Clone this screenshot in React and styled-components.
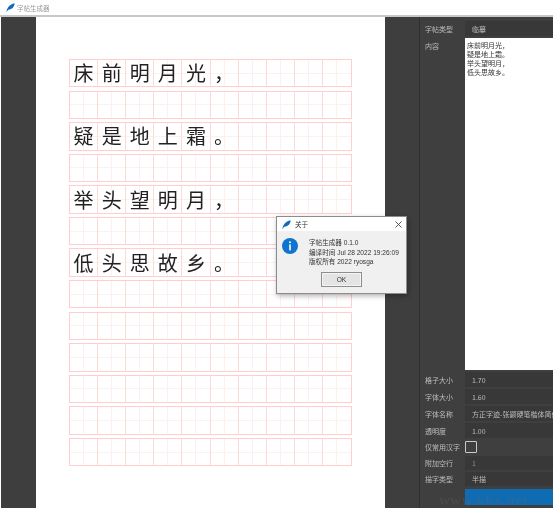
import React from 'react'
import styled, { createGlobalStyle } from 'styled-components'

const GlobalStyle = createGlobalStyle`
  html, body { margin: 0; padding: 0; background: #fff; overflow: hidden; }
  body { font-family: "Noto Sans CJK SC", "Liberation Sans", sans-serif; }
`

const Window = styled.div`
  position: relative;
  width: 553px;
  height: 508px;
  overflow: hidden;
  display: flex;
  flex-direction: column;
  background: #fff;
  filter: blur(0.3px);
`

const TitleBar = styled.div`
  height: 15px;
  flex: none;
  display: flex;
  align-items: center;
  gap: 2px;
  padding-left: 6px;
  border-bottom: 2px solid #c8c8c8;
  font-size: 6.5px;
  color: #9a9a9a;
`

const Body = styled.div`
  flex: 1;
  min-height: 0;
  display: flex;
  padding-left: 1px;
`

const Gutter = styled.div`
  flex: none;
  width: ${p => p.$width}px;
  background: #3e3e3e;
  border-right: ${p => (p.$line ? '1px solid #2f2f2f' : 'none')};
  box-sizing: border-box;
`

const Page = styled.div`
  flex: none;
  width: 349px;
  box-sizing: border-box;
  padding: 42px 0 0 33px;
  background: #fff;
`

const Sheet = styled.div`
  width: 283px;
  display: grid;
  grid-auto-rows: 28.4px;
  row-gap: 3.2px;
`

const GridRow = styled.div`
  display: grid;
  grid-template-columns: repeat(10, 1fr);
  box-sizing: border-box;
  border: 1px solid #ffcfcf;
`

const Cell = styled.div`
  display: flex;
  align-items: center;
  justify-content: center;
  border-right: 1px solid #ffd8d8;
  font-size: 20px;
  font-weight: 400;
  line-height: 1;
  color: #222;
  background:
    linear-gradient(#fff0f0, #fff0f0) center / 100% 1px no-repeat,
    linear-gradient(#fff0f0, #fff0f0) center / 1px 100% no-repeat;

  &:last-child { border-right: none; }
`

const Panel = styled.div`
  flex: 1;
  min-width: 0;
  background: #3f3f3f;
  padding: 4px 0 0 5px;
  display: grid;
  grid-template-columns: 40px 100px;
  grid-template-rows: 15px 332px repeat(4, 15px) 14px repeat(2, 14px) 17px;
  row-gap: 2px;
  align-items: center;
  font-size: 7px;
  color: #bdbdbd;
`

const Label = styled.div`
  align-self: ${p => (p.$top ? 'start' : 'center')};
  padding-top: ${p => (p.$top ? '3px' : '0')};
  white-space: nowrap;
`

const Field = styled.div`
  height: 100%;
  box-sizing: border-box;
  padding-left: 7px;
  display: flex;
  align-items: center;
  background: #383838;
  color: ${p => (p.$dim ? '#8f8f8f' : '#bcbcbc')};
  white-space: nowrap;
  overflow: hidden;
`

const TextBox = styled.div`
  height: 100%;
  box-sizing: border-box;
  padding: 3px 2px;
  background: #fff;
  color: #333;
  line-height: 9px;
  white-space: pre-line;
`

const CheckBox = styled.div`
  width: 10px;
  height: 10px;
  border: 1px solid #c9c9c9;
  border-radius: 1px;
`

const ActionBar = styled.div`
  height: 16px;
  margin-top: 1px;
  background: #0f6bb2;
`

const Watermark = styled.div`
  position: absolute;
  left: 439px;
  bottom: -1px;
  font-family: "Liberation Serif", serif;
  font-size: 15px;
  font-weight: 700;
  letter-spacing: 0.5px;
  color: rgba(110, 110, 110, 0.2);
`

const Dialog = styled.div`
  position: absolute;
  left: 276px;
  top: 216px;
  width: 131px;
  height: 78px;
  box-sizing: border-box;
  display: flex;
  flex-direction: column;
  background: #f0f0f0;
  border: 1px solid #8c8c8c;
  box-shadow: 1px 2px 5px rgba(0, 0, 0, 0.3);
  font-size: 6.6px;
  color: #333;
`

const DialogTitle = styled.div`
  height: 14px;
  flex: none;
  display: flex;
  align-items: center;
  gap: 4px;
  padding: 0 4px 0 5px;
  background: #fff;
`

const CloseButton = styled.div`
  margin-left: auto;
  display: flex;
`

const DialogBody = styled.div`
  display: flex;
  gap: 11px;
  padding: 7px 0 0 5px;
`

const InfoLine = styled.div`
  line-height: 9.7px;
  white-space: nowrap;
  font-family: "Liberation Sans", "Noto Sans CJK SC", sans-serif;
`

const OkButton = styled.div`
  align-self: center;
  margin-top: 5px;
  width: 41px;
  height: 15px;
  box-sizing: border-box;
  display: flex;
  align-items: center;
  justify-content: center;
  background: #e4e4e4;
  border: 1px solid #8e8e8e;
  box-shadow: inset 0 0 0 1px #f4f4f4;
  font-family: "Liberation Sans", sans-serif;
`

const Feather = () => (
  <svg width="9" height="9" viewBox="0 0 10 10">
    <path d="M0.5 9.6 C1.2 6 3.6 1.6 9.6 0.4 C9.4 4.4 6.6 7.6 2.4 7.4 L0.9 9.8 Z" fill="#0f6cbd" />
  </svg>
)

const InfoIcon = () => (
  <svg width="16" height="16" viewBox="0 0 16 16">
    <circle cx="8" cy="8" r="8" fill="#0f74d0" />
    <circle cx="8" cy="4.2" r="1" fill="#fff" />
    <rect x="7.2" y="6.4" width="1.6" height="6" fill="#fff" />
  </svg>
)

const poem = ['床前明月光，', '', '疑是地上霜。', '', '举头望明月，', '', '低头思故乡。', '', '', '', '', '', '']

export default function App() {
  return (
    <Window>
      <GlobalStyle />
      <TitleBar>
        <Feather />
        字帖生成器
      </TitleBar>
      <Body>
        <Gutter $width={35} />
        <Page>
          <Sheet>
            {poem.map((line, r) => (
              <GridRow key={r}>
                {Array.from({ length: 10 }, (_, c) => (
                  <Cell key={c}>{line[c]}</Cell>
                ))}
              </GridRow>
            ))}
          </Sheet>
        </Page>
        <Gutter $width={35} $line />
        <Panel>
          <Label>字帖类型</Label>
          <Field>临摹</Field>
          <Label $top>内容</Label>
          <TextBox>{'床前明月光，\n疑是地上霜。\n举头望明月，\n低头思故乡。'}</TextBox>
          <Label>格子大小</Label>
          <Field>1.70</Field>
          <Label>字体大小</Label>
          <Field>1.60</Field>
          <Label>字体名称</Label>
          <Field>方正字迹-张颢硬笔楷体简体</Field>
          <Label>透明度</Label>
          <Field>1.00</Field>
          <Label>仅常用汉字</Label>
          <CheckBox />
          <Label>附加空行</Label>
          <Field $dim>1</Field>
          <Label>描字类型</Label>
          <Field>半描</Field>
          <span />
          <ActionBar />
        </Panel>
      </Body>
      <Watermark>www.kkx.net</Watermark>
      <Dialog>
        <DialogTitle>
          <Feather />
          关于
          <CloseButton>
            <svg width="7" height="7" viewBox="0 0 7 7">
              <path d="M0.5 0.5 L6.5 6.5 M6.5 0.5 L0.5 6.5" stroke="#333" strokeWidth="0.8" />
            </svg>
          </CloseButton>
        </DialogTitle>
        <DialogBody>
          <InfoIcon />
          <div>
            <InfoLine>字帖生成器 0.1.0</InfoLine>
            <InfoLine>编译时间 Jul 28 2022 19:26:09</InfoLine>
            <InfoLine>版权所有 2022 ryosga</InfoLine>
          </div>
        </DialogBody>
        <OkButton>OK</OkButton>
      </Dialog>
    </Window>
  )
}
